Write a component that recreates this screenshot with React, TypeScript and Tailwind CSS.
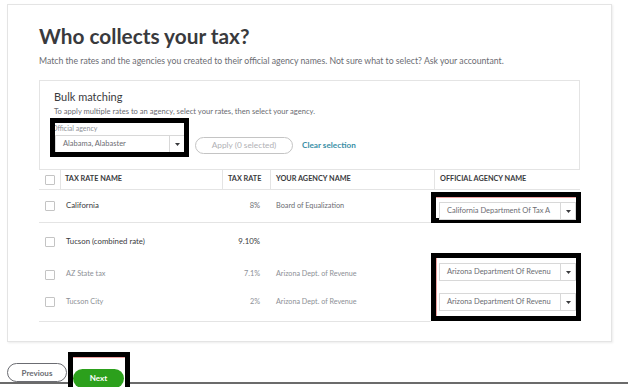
import React from 'react';

const font = { fontFamily: 'Lato, "Open Sans", "Liberation Sans", sans-serif' };

function Checkbox() {
  return <div className="w-[10px] h-[10px] border border-[#c4c4c4] rounded-[1px] bg-white" />;
}

function Caret() {
  return (
    <svg width="5" height="3" viewBox="0 0 5 3">
      <path d="M0 0 L5 0 L2.5 3 Z" fill="#393a3d" />
    </svg>
  );
}

function Select({ value, width }: { value: string; width: string }) {
  return (
    <div className={`flex h-[18px] border border-[#d8d8d8] bg-white ${width}`}>
      <div className="flex-1 flex items-center pl-[7px] text-[7.5px] text-[#6b6c72] whitespace-nowrap overflow-hidden">
        {value}
      </div>
      <div className="w-[15px] border-l border-[#d8d8d8] flex items-center justify-center">
        <Caret />
      </div>
    </div>
  );
}

export default function App() {
  return (
    <div className="w-[628px] h-[387px] overflow-hidden bg-white" style={font}>
      {/* Main card */}
      <div className="ml-[7px] mt-[4px] w-[605px] h-[338px] border border-[#e4e4e4] shadow-[1px_1px_2px_rgba(0,0,0,0.08)] px-[31px] pt-[19px]">
        <h1 className="text-[20.8px] leading-[24px] font-bold text-[#393a3d]">Who collects your tax?</h1>
        <p className="mt-[8px] text-[8.7px] leading-[10px] text-[#6b6c72] whitespace-nowrap">
          Match the rates and the agencies you created to their official agency names. Not sure what to select? Ask your accountant.
        </p>

        {/* Bulk matching */}
        <div className="mt-[14px] h-[90px] border border-[#e4e4e4] pl-[10px] pt-[9px]">
          <div className="pl-[4px] text-[11px] leading-[14px] text-[#393a3d]">Bulk matching</div>
          <div className="pl-[4px] mt-[3px] text-[7.6px] leading-[9px] text-[#6b6c72]">
            To apply multiple rates to an agency, select your rates, then select your agency.
          </div>
          <div className="mt-[2px] flex items-end">
            <div className="w-[139px] h-[39px] border-[5px] border-black overflow-hidden bg-white">
              <div className="h-[12px] -ml-[3px] pt-[1px] text-[7px] leading-[9px] text-[#8d9096]">Official agency</div>
              <Select value="Alabama, Alabaster" width="w-[130px] h-[17px]" />
            </div>
            <button className="ml-[6px] mb-[3px] w-[98px] h-[17px] rounded-full border border-[#c4c4c4] text-[8.3px] text-[#b0b1b5]">
              Apply (0 selected)
            </button>
            <span className="ml-[9px] mb-[6px] text-[8.2px] font-bold text-[#3a8fa6]">Clear selection</span>
          </div>
        </div>

        {/* Table */}
        <div className="grid grid-cols-[22px_162px_48px_164px_145px] text-[#393a3d]">
          {/* header */}
          <div className="h-[20px] border-b border-r border-[#e4e4e4] flex items-center pl-[6px]"><Checkbox /></div>
          <div className="h-[20px] border-b border-r border-[#e4e4e4] flex items-center pl-[4px] text-[7.3px] font-bold">TAX RATE NAME</div>
          <div className="h-[20px] border-b border-r border-[#e4e4e4] flex items-center pl-[5px] text-[7.3px] font-bold">TAX RATE</div>
          <div className="h-[20px] border-b border-r border-[#e4e4e4] flex items-center pl-[5px] text-[7.3px] font-bold">YOUR AGENCY NAME</div>
          <div className="h-[20px] border-b border-[#e4e4e4] flex items-center pl-[5px] text-[7.3px] font-bold">OFFICIAL AGENCY NAME</div>

          {/* California */}
          <div className="h-[33px] border-b border-[#e4e4e4] flex items-center pl-[6px]"><Checkbox /></div>
          <div className="h-[33px] border-b border-[#e4e4e4] flex items-center pl-[5px] text-[7.8px]">California</div>
          <div className="h-[33px] border-b border-[#e4e4e4] flex items-center justify-end pr-[11px] text-[7.5px] text-[#6b6c72]">8%</div>
          <div className="h-[33px] border-b border-[#e4e4e4] flex items-center pl-[5px] text-[7.3px] text-[#6b6c72]">Board of Equalization</div>
          <div className="h-[33px] border-b border-[#e4e4e4] flex items-start">
            <div className="-ml-[4px] mt-[2px] w-[154px] h-[31px] border-[5px] border-black bg-white">
              <div className="h-full border-t border-[#f0a0a0] pl-[3px] pt-[4px]">
                <Select value="California Department Of Tax A" width="w-[137px]" />
              </div>
            </div>
          </div>

          {/* Tucson combined */}
          <div className="h-[38px] flex items-center pl-[6px]"><Checkbox /></div>
          <div className="h-[38px] flex items-center pl-[5px] text-[7.8px]">Tucson (combined rate)</div>
          <div className="h-[38px] flex items-center justify-end pr-[11px] text-[7.8px]">9.10%</div>
          <div className="h-[38px]" />
          <div className="h-[38px]" />

          {/* AZ State tax */}
          <div className="h-[27px] flex items-center pl-[6px]"><Checkbox /></div>
          <div className="h-[27px] flex items-center pl-[5px] text-[7.3px] text-[#8d9096]">AZ State tax</div>
          <div className="h-[27px] flex items-center justify-end pr-[11px] text-[7.3px] text-[#8d9096]">7.1%</div>
          <div className="h-[27px] flex items-center pl-[5px] text-[7.2px] text-[#8d9096]">Arizona Dept. of Revenue</div>
          <div className="row-span-2 h-[55px] flex items-start">
            <div className="-ml-[4px] -mt-[8px] w-[155px] h-[68px] border-[5px] border-black bg-white">
              <div className="h-full border-l border-[#f0a0a0] pl-[2px] pt-[5px] flex flex-col gap-[12px]">
                <Select value="Arizona Department Of Revenu" width="w-[137px]" />
                <Select value="Arizona Department Of Revenu" width="w-[137px]" />
              </div>
            </div>
          </div>

          {/* Tucson City */}
          <div className="h-[28px] flex items-center pl-[6px]"><Checkbox /></div>
          <div className="h-[28px] flex items-center pl-[5px] text-[7.3px] text-[#8d9096]">Tucson City</div>
          <div className="h-[28px] flex items-center justify-end pr-[11px] text-[7.3px] text-[#8d9096]">2%</div>
          <div className="h-[28px] flex items-center pl-[5px] text-[7.2px] text-[#8d9096]">Arizona Dept. of Revenue</div>
        </div>
        <div className="h-[6px] w-[392px] border-b border-[#e4e4e4]" />
      </div>

      {/* Footer */}
      <div className="h-[42px] border-b-2 border-[#6b6b6b] flex items-end pl-[7px]">
        <button className="w-[60px] h-[19px] rounded-full border-[1.5px] border-[#6b6c72] text-[8px] font-bold text-[#6b6c72] bg-white">
          Previous
        </button>
        <div className="ml-[1px] -mb-[12px] w-[62px] h-[42px] border-[5px] border-black bg-white">
          <div className="h-full border-t border-[#f0a0a0] pt-[5px]">
            <button className="w-[51px] h-[19px] rounded-full bg-[#2ca01c] text-[8px] font-bold text-white">Next</button>
          </div>
        </div>
      </div>
    </div>
  );
}
